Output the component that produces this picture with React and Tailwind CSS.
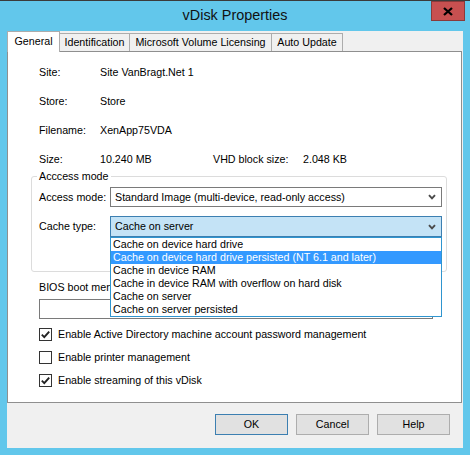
import clsx from 'clsx'

function Chevron() {
  return (
    <svg width="8" height="6" viewBox="0 0 8 6" className="shrink-0">
      <path d="M1 1.2 L4 4.4 L7 1.2" fill="none" stroke="#4a4a4a" strokeWidth="1.9" />
    </svg>
  )
}

function Combo({ value, focused, children }) {
  return (
    <div
      className={clsx(
        'relative flex flex-1 items-center justify-between border pl-[4px] pr-[5px]',
        focused ? 'h-[21px] border-[#3c7fb1] bg-[#c4e3f6]' : 'h-[20px] border-[#7a7a7a] bg-white'
      )}
    >
      <span>{value}</span>
      <Chevron />
      {children}
    </div>
  )
}

function Check({ checked, label }) {
  return (
    <div className="flex h-[23px] items-center gap-[6px] pl-[8px]">
      <span className="flex h-[13px] w-[13px] items-center justify-center border border-[#333333] bg-white">
        {checked && (
          <svg width="11" height="11" viewBox="0 0 11 11">
            <path d="M1.8 5.6 L4.3 8.1 L9.2 2.6" fill="none" stroke="#222222" strokeWidth="1.9" />
          </svg>
        )}
      </span>
      <span>{label}</span>
    </div>
  )
}

const cacheTypes = [
  'Cache on device hard drive',
  'Cache on device hard drive persisted (NT 6.1 and later)',
  'Cache in device RAM',
  'Cache in device RAM with overflow on hard disk',
  'Cache on server',
  'Cache on server persisted',
]

export default function App() {
  return (
    <div className="relative h-[455px] w-[470px] border-t border-[#3b3b3b] bg-[#62c7eb] font-['Liberation_Sans',Arial,sans-serif] text-[10.7px] leading-[13px] text-black">
      {/* title bar */}
      <div className="flex h-[30px] items-center justify-center pb-[2px] text-[14.4px] text-[#111111]">
        vDisk Properties
      </div>
      <button className="absolute right-[5px] top-0 flex h-[20px] w-[34px] items-center justify-center border border-[#8a3a3a] bg-[#c75050]">
        <svg width="10" height="9" viewBox="0 0 10 9">
          <path d="M1 1 L9 8 M9 1 L1 8" stroke="#000000" strokeWidth="2.3" />
        </svg>
      </button>

      <div className="ml-[7px] flex h-[417px] w-[456px] flex-col bg-[#f0f0f0]">
        {/* tabs */}
        <div className="flex h-[20px] items-end">
          <div className="relative z-10 -mb-px flex h-[21px] w-[53px] items-center justify-center border border-b-0 border-[#acacac] bg-white pb-[2px]">
            General
          </div>
          <div className="-ml-px flex h-[18px] w-[71px] items-center justify-center border border-b-0 border-[#acacac]">
            Identification
          </div>
          <div className="-ml-px flex h-[18px] w-[143px] items-center justify-center border border-b-0 border-[#acacac]">
            Microsoft Volume Licensing
          </div>
          <div className="-ml-px flex h-[18px] w-[72px] items-center justify-center border border-b-0 border-[#acacac]">
            Auto Update
          </div>
        </div>

        {/* tab page */}
        <div className="h-[352px] w-[455px] border border-[#8f8f8f] bg-white pt-[6px]">
          <div className="ml-[23px] w-[416px]">
            <div className="flex h-[29px] items-center pl-[8px]">
              <span className="w-[61px]">Site:</span>
              <span>Site VanBragt.Net 1</span>
            </div>
            <div className="flex h-[29px] items-center pl-[8px]">
              <span className="w-[61px]">Store:</span>
              <span>Store</span>
            </div>
            <div className="flex h-[29px] items-center pl-[8px]">
              <span className="w-[61px]">Filename:</span>
              <span>XenApp75VDA</span>
            </div>
            <div className="flex h-[29px] items-center pl-[8px]">
              <span className="w-[61px]">Size:</span>
              <span className="w-[113px]">10.240 MB</span>
              <span className="w-[90px]">VHD block size:</span>
              <span>2.048 KB</span>
            </div>

            <fieldset className="-mt-[4px] rounded-[3px] border border-[#dcdcdc] pb-[34px] pl-[7px] pr-[4px] pt-[4px]">
              <legend className="-ml-[2px] px-[2px] leading-[13px]">Acccess mode</legend>
              <div className="flex items-center">
                <span className="w-[71px]">Access mode:</span>
                <Combo value="Standard Image (multi-device, read-only access)" />
              </div>
              <div className="mt-[9px] flex items-center">
                <span className="w-[71px]">Cache type:</span>
                <Combo focused value="Cache on server">
                  <ul className="absolute left-[-1px] right-[-1px] top-[calc(100%+1px)] z-20 border border-[#2f95cf] bg-white">
                    {cacheTypes.map((t, i) => (
                      <li
                        key={t}
                        className={clsx('h-[13px] whitespace-nowrap pl-[2px]', i === 1 && 'bg-[#3399ff] text-white')}
                      >
                        {t}
                      </li>
                    ))}
                  </ul>
                </Combo>
              </div>
            </fieldset>

            <div className="mt-[9px] ml-[8px] w-[71px] overflow-hidden whitespace-nowrap">BIOS boot menu text:</div>
            <input
              readOnly
              className="ml-[8px] mt-[5px] block h-[20px] w-[394px] border border-[#7a7a7a] bg-white"
            />

            <div className="mt-[4px]">
              <Check checked label="Enable Active Directory machine account password management" />
              <Check label="Enable printer management" />
              <Check checked label="Enable streaming of this vDisk" />
            </div>
          </div>
        </div>

        {/* buttons */}
        <div className="flex flex-1 items-start justify-end gap-[8px] pr-[13px] pt-[11px]">
          <button className="h-[21px] w-[73px] border border-[#3c7fb1] bg-[#e1e1e1]">OK</button>
          <button className="h-[21px] w-[73px] border border-[#adadad] bg-[#e1e1e1]">Cancel</button>
          <button className="h-[21px] w-[73px] border border-[#adadad] bg-[#e1e1e1]">Help</button>
        </div>
      </div>
    </div>
  )
}
